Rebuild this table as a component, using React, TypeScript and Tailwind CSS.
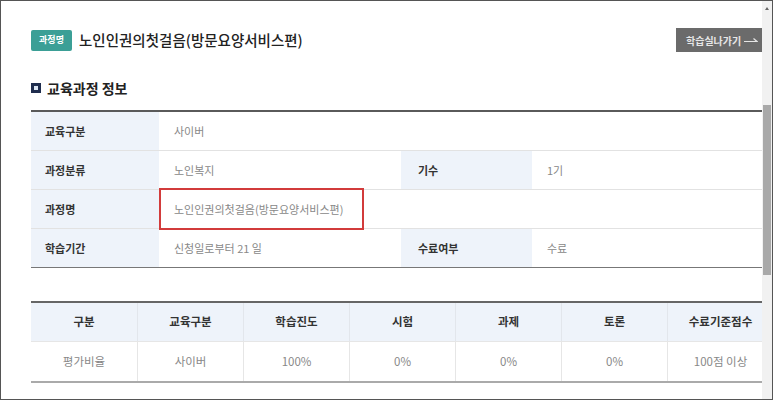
import React from "react";

const font = { fontFamily: '"Noto Sans CJK KR", "Noto Sans", sans-serif' };

const infoRows = [
  [{ label: "교육구분", value: "사이버" }],
  [
    { label: "과정분류", value: "노인복지" },
    { label: "기수", value: "1기" },
  ],
  [{ label: "과정명", value: "노인인권의첫걸음(방문요양서비스편)", marked: true }],
  [
    { label: "학습기간", value: "신청일로부터 21 일" },
    { label: "수료여부", value: "수료" },
  ],
];

const headers = ["구분", "교육구분", "학습진도", "시험", "과제", "토론", "수료기준점수"];
const values = ["평가비율", "사이버", "100%", "0%", "0%", "0%", "100점 이상"];

const App = () => {
  return (
    <div
      className="flex h-[400px] w-[773px] overflow-hidden border border-[#555] bg-white"
      style={font}
    >
      <div className="flex-1 overflow-hidden pl-[30px] pt-[27px]">
        <div className="w-[742px]">
          {/* title bar */}
          <div className="flex h-[24px] items-center">
            <span className="flex h-[21px] w-[41px] items-center justify-center rounded-[2px] bg-[#3b9f96] text-[9px] font-bold text-white">
              과정명
            </span>
            <span className="ml-[7px] text-[14.5px] font-medium text-[#222]">
              노인인권의첫걸음(방문요양서비스편)
            </span>
            <button className="ml-auto flex h-[24px] w-[97px] items-center bg-[#6b6b6b] pl-[10px] text-[10px] font-bold text-[#e6e6e6]">
              학습실나가기
              <svg width="14" height="8" viewBox="0 0 14 8" className="ml-[3px]">
                <path d="M0 5.5 H13 L9.5 2.5" fill="none" stroke="#e6e6e6" strokeWidth="1.2" />
              </svg>
            </button>
          </div>

          {/* section heading */}
          <div className="mt-[26px] flex h-[20px] items-center">
            <span className="h-[10px] w-[10px] border-[3px] border-[#1f2d4e] bg-[#dce7f4]" />
            <span className="ml-[6px] text-[14px] font-bold text-[#222]">교육과정 정보</span>
          </div>

          {/* info table */}
          <div className="mt-[12px] border-t-2 border-[#5a5a5a]">
            {infoRows.map((row, i) => (
              <div
                key={i}
                className={`flex h-[39px] border-b ${
                  i === infoRows.length - 1 ? "border-[#777]" : "border-[#e2e2e2]"
                }`}
              >
                {row.map((cell, j) => (
                  <React.Fragment key={j}>
                    <div
                      className={`flex items-center bg-[#eef3fa] text-[11px] font-bold text-[#333] ${
                        j === 0 ? "w-[128px] pl-[14px]" : "w-[131px] pl-[17px]"
                      }`}
                    >
                      {cell.label}
                    </div>
                    <div
                      className={`relative flex items-center pl-[15px] text-[11px] text-[#888] ${
                        row.length === 2 && j === 0 ? "w-[242px]" : "flex-1"
                      }`}
                    >
                      {cell.value}
                      {"marked" in cell && cell.marked && (
                        <span className="absolute left-0 top-[-2px] h-[42px] w-[205px] border-2 border-[#d23b3b]" />
                      )}
                    </div>
                  </React.Fragment>
                ))}
              </div>
            ))}
          </div>

          {/* score table */}
          <div className="mt-[33px] border-t-2 border-b-2 border-t-[#666] border-b-[#aaa]">
            <div className="grid h-[39px] grid-cols-7 border-b border-[#e6e6e6] bg-[#eef3fa]">
              {headers.map((h, i) => (
                <div
                  key={h}
                  className={`flex items-center justify-center text-[11.5px] font-bold text-[#333] ${
                    i > 0 ? "border-l border-[#e2e6ec]" : ""
                  }`}
                >
                  {h}
                </div>
              ))}
            </div>
            <div className="grid h-[39px] grid-cols-7">
              {values.map((v, i) => (
                <div
                  key={i}
                  className={`flex items-center justify-center text-[11.5px] text-[#888] ${
                    i > 0 ? "border-l border-[#e6e6e6]" : ""
                  }`}
                >
                  {v}
                </div>
              ))}
            </div>
          </div>
        </div>
      </div>

      {/* scrollbar */}
      <div className="relative w-[10px] shrink-0 bg-[#f1f1f1]">
        <svg width="10" height="8" viewBox="0 0 10 8" className="absolute left-0 top-[3px]">
          <path d="M3 6 L5 3 L7 6 Z" fill="#666" />
        </svg>
        <div className="absolute left-[1px] top-[104px] h-[170px] w-[8px] bg-[#a9a9a9]" />
      </div>
    </div>
  );
};

export default App;
